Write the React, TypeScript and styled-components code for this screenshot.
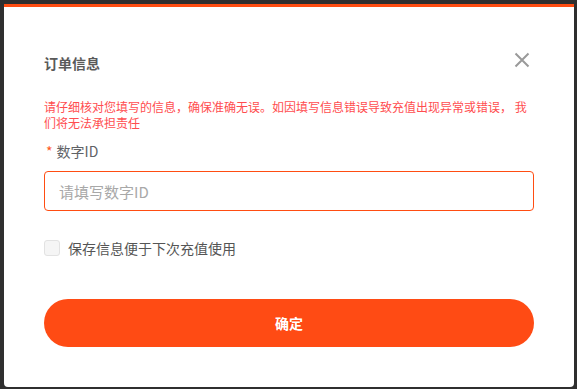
import React, { useState } from "react";
import styled, { createGlobalStyle } from "styled-components";

const Global = createGlobalStyle`
  html, body { margin: 0; padding: 0; background: #2f2f2f; }
  body { font-family: "Noto Sans CJK SC", "Noto Sans", "Liberation Sans", sans-serif; }
  * { box-sizing: border-box; }
`;

const Page = styled.div`
  width: 577px;
  height: 389px;
  padding: 4px 3px 2px 4px;
  background: #2f2f2f;
`;

const Modal = styled.div`
  width: 570px;
  height: 383px;
  background: #fff;
  border-top: 3px solid #ff4d12;
  border-radius: 0 0 4px 4px;
  padding: 46px 40px 40px 40px;
  display: flex;
  flex-direction: column;
`;

const Header = styled.div`
  display: flex;
  align-items: center;
  justify-content: space-between;
  height: 20px;
`;

const Title = styled.div`
  font-size: 14px;
  line-height: 20px;
  font-weight: 600;
  color: #5a5a5a;
`;

const Close = styled.button`
  border: none;
  background: none;
  padding: 0;
  width: 16px;
  height: 16px;
  margin-right: 4px;
  margin-top: -6px;
  display: flex;
  align-items: center;
  justify-content: center;
  cursor: pointer;
`;

const Warning = styled.div`
  margin-top: 26px;
  font-size: 12px;
  line-height: 16px;
  color: #ff4d4f;
`;

const Label = styled.div`
  margin-top: 10px;
  font-size: 14px;
  line-height: 20px;
  color: #606266;
  display: flex;
  align-items: center;
`;

const Star = styled.span`
  color: #ff5a1f;
  margin-right: 4px;
  margin-left: 2px;
`;

const Input = styled.input`
  margin-top: 10px;
  width: 100%;
  height: 40px;
  border: 1px solid #ff4d12;
  border-radius: 4px;
  padding: 0 14px;
  font-family: inherit;
  font-size: 15px;
  color: #333;
  outline: none;
  &::placeholder { color: #a8a8a8; }
`;

const CheckRow = styled.label`
  margin-top: 27px;
  display: flex;
  align-items: center;
  height: 20px;
  font-size: 14px;
  color: #555;
  cursor: pointer;
`;

const Box = styled.span<{ $on: boolean }>`
  width: 16px;
  height: 16px;
  border: 1px solid #e2e2e2;
  border-radius: 3px;
  background: ${(p) => (p.$on ? "#ff4d12" : "#f5f5f5")};
  margin-right: 8px;
`;

const Submit = styled.button`
  margin-top: 41px;
  width: 100%;
  height: 48px;
  border: none;
  border-radius: 24px;
  background: #ff4b14;
  color: #fff;
  font-family: inherit;
  font-size: 14px;
  font-weight: 600;
  cursor: pointer;
`;

export default function App() {
  const [on, setOn] = useState(false);
  return (
    <>
      <Global />
      <Page>
        <Modal>
          <Header>
            <Title>订单信息</Title>
            <Close aria-label="close">
              <svg width="16" height="16" viewBox="0 0 16 16">
                <path d="M1.5 1.5L14.5 14.5M14.5 1.5L1.5 14.5" stroke="#9a9a9a" strokeWidth="2" fill="none" />
              </svg>
            </Close>
          </Header>
          <Warning>
            请仔细核对您填写的信息，确保准确无误。如因填写信息错误导致充值出现异常或错误， 我们将无法承担责任
          </Warning>
          <Label>
            <Star>*</Star>数字ID
          </Label>
          <Input placeholder="请填写数字ID" />
          <CheckRow onClick={() => setOn(!on)}>
            <Box $on={on} />
            保存信息便于下次充值使用
          </CheckRow>
          <Submit>确定</Submit>
        </Modal>
      </Page>
    </>
  );
}
